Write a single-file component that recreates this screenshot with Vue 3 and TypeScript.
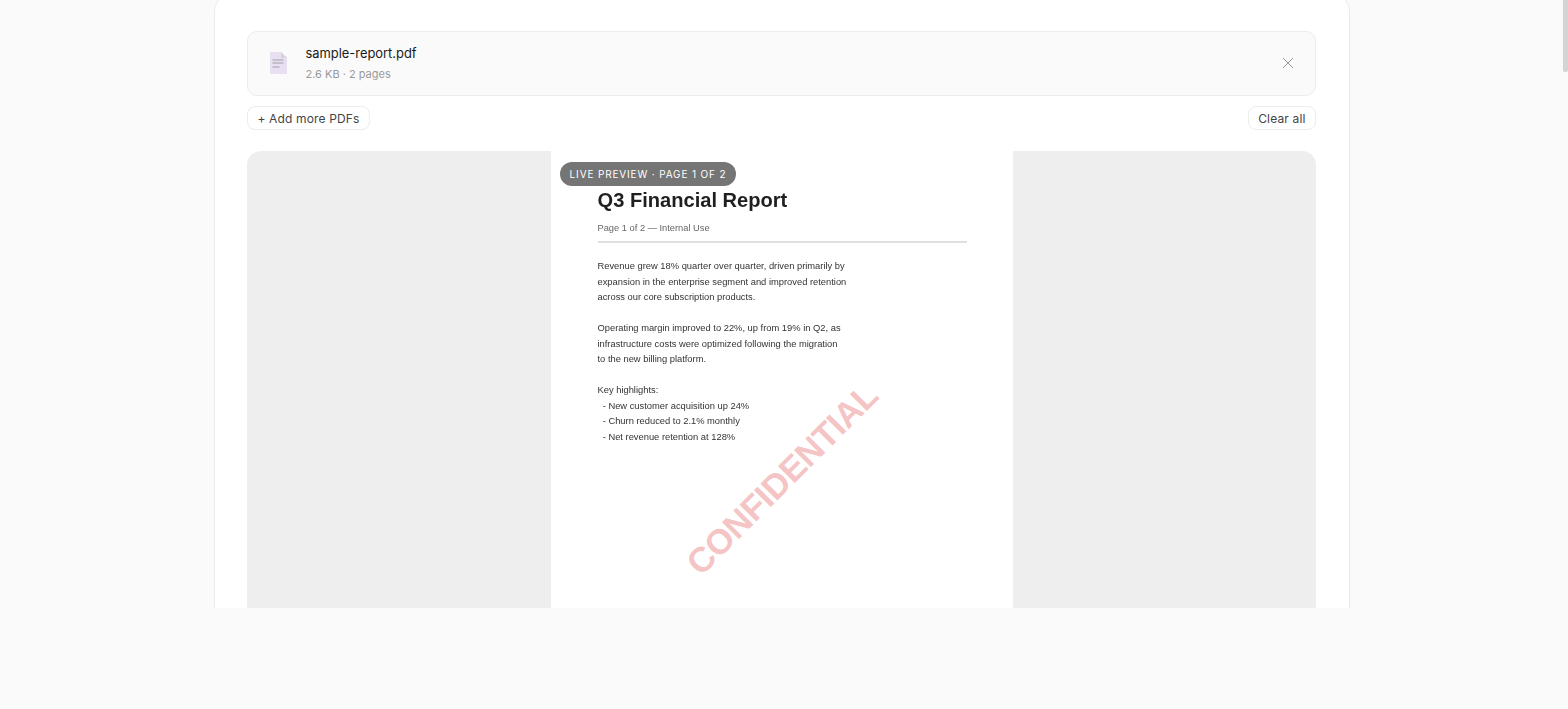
<script setup lang="ts">
const paragraphs: string[][] = [
  ['Revenue grew 18% quarter over quarter, driven primarily by', 'expansion in the enterprise segment and improved retention', 'across our core subscription products.'],
  ['Operating margin improved to 22%, up from 19% in Q2, as', 'infrastructure costs were optimized following the migration', 'to the new billing platform.'],
  ['Key highlights:', '  - New customer acquisition up 24%', '  - Churn reduced to 2.1% monthly', '  - Net revenue retention at 128%'],
]
</script>

<template>
  <div class="viewport">
    <main class="card">
      <section class="file-row">
        <svg class="file-icon" width="24" height="28" viewBox="0 0 24 28">
          <path d="M3 3h11l6 6v16H3z" fill="#e8dff2" />
          <path d="M14 3l6 6h-6z" fill="#d6d3da" />
          <path d="M5.500 11h11M5.500 14h11M5.500 18h7" stroke="#a29daa" stroke-width="1" fill="none" />
        </svg>
        <div class="file-meta">
          <div class="file-name">sample-report.pdf</div>
          <div class="file-info">2.6 KB · 2 pages</div>
        </div>
        <svg class="close" width="12" height="12" viewBox="0 0 12 12">
          <path d="M1 1l10 10M11 1L1 11" stroke="#999" stroke-width="1" fill="none" />
        </svg>
      </section>

      <div class="actions">
        <button class="btn">+ Add more PDFs</button>
        <button class="btn">Clear all</button>
      </div>

      <section class="preview">
        <div class="sheet">
          <div class="raster">
            <h1>Q3 Financial Report</h1>
            <p class="sub">Page 1 of 2 — Internal Use</p>
            <hr />
            <div class="body">
              <p v-for="(para, i) in paragraphs" :key="i">
                <span v-for="(line, j) in para" :key="j" class="line">{{ line }}</span>
              </p>
            </div>
          </div>
          <div class="mark">CONFIDENTIAL</div>
        </div>
        <div class="badge">LIVE PREVIEW · PAGE 1 OF 2</div>
      </section>
    </main>
    <div class="thumb"></div>
  </div>
</template>

<style>
html, body { margin: 0; background: #fafafa; }
</style>

<style scoped>
.viewport {
  height: 608px;
  overflow: hidden;
  position: relative;
  font-family: Inter, "Liberation Sans", sans-serif;
  background: #fafafa;
}
.thumb {
  position: absolute;
  right: 0;
  top: 0;
  width: 5px;
  height: 72px;
  background: #d4d4d4;
  border-radius: 0 0 2px 2px;
}
.card {
  box-sizing: border-box;
  width: 1136px;
  height: 800px;
  margin: -8px 0 0 213.5px;
  padding: 37.5px 32.5px 32px 32.5px;
  background: #fff;
  border: 1.5px solid #ececec;
  border-radius: 20px;
}
.file-row {
  box-sizing: border-box;
  height: 65px;
  display: flex;
  align-items: center;
  padding: 0 21px 0 19px;
  background: #fafafa;
  border: 1px solid #ececec;
  border-radius: 10px;
}
.file-icon { flex: none; }
.file-meta { flex: 1; margin-left: 14.5px; }
.file-name { font-size: 12.9px; color: #1a1a1a; line-height: 18px; }
.file-info { font-size: 11px; color: #9a9a9a; line-height: 14px; margin-top: 4px; }
.actions {
  display: flex;
  justify-content: space-between;
  margin-top: 10.5px;
}
.btn {
  box-sizing: border-box;
  height: 24px;
  padding: 0 9.5px;
  background: #fff;
  border: 1px solid #ececec;
  border-radius: 8px;
  font: 12px Inter, "Liberation Sans", sans-serif;
  letter-spacing: .15px;
  color: #444;
}
.preview {
  position: relative;
  margin-top: 20.5px;
  height: 600px;
  background: #eeeeee;
  border-radius: 14px;
  display: flex;
  justify-content: center;
  overflow: hidden;
}
.sheet {
  box-sizing: border-box;
  position: relative;
  width: 462px;
  padding: 37px 46px 0 47px;
  background: #fff;
  font-family: "Liberation Sans", sans-serif;
}
.raster { filter: blur(.25px); }
h1 { margin: 0; font-size: 20.1px; line-height: 25px; font-weight: 700; color: #1f1f1f; }
.sub { margin: 9px 0 0; font-size: 9.3px; line-height: 12px; color: #666; }
hr { margin: 7.5px 0 0; border: 0; height: 1.5px; background: #e0e0e0; }
.body { margin-top: 16.5px; font-size: 9.35px; color: #333; }
.body p { margin: 0 0 15.5px; }
.line { display: block; height: 15.5px; line-height: 15.5px; white-space: pre; }
.mark {
  position: absolute;
  left: 231.5px;
  top: 328.5px;
  transform: translate(-50%, -50%) rotate(-45deg);
  font-size: 34.8px;
  font-weight: 700;
  letter-spacing: -.5px;
  white-space: nowrap;
  color: rgba(220, 50, 50, .3);
}
.badge {
  position: absolute;
  left: 313px;
  top: 11px;
  box-sizing: border-box;
  width: 176px;
  height: 24px;
  line-height: 24px;
  text-align: center;
  border-radius: 12px;
  background: #757575;
  color: #fff;
  font-size: 10px;
  letter-spacing: .85px;
  white-space: nowrap;
}
</style>
